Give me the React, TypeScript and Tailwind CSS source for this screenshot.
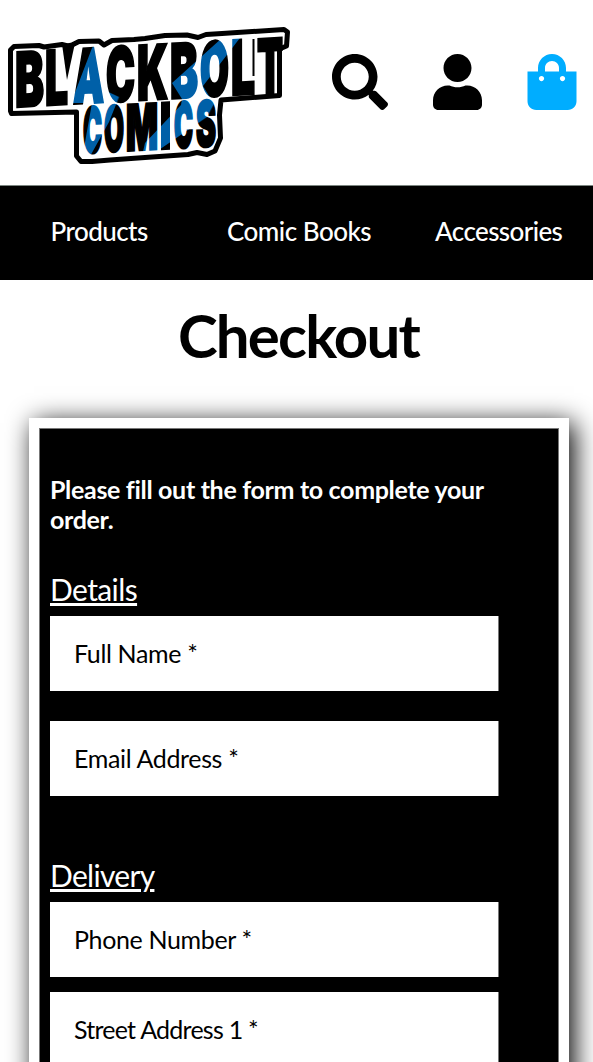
import { FaSearch, FaShoppingBag, FaUser } from 'react-icons/fa';

type Glyph = { ch: string; x: number; w: number };

const TOP_ROW: Glyph[] = [
  { ch: 'B', x: 15, w: 29 },
  { ch: 'L', x: 45, w: 23 },
  { ch: 'A', x: 73, w: 31 },
  { ch: 'C', x: 106, w: 29 },
  { ch: 'K', x: 137, w: 31 },
  { ch: 'B', x: 170, w: 28 },
  { ch: 'O', x: 200, w: 29 },
  { ch: 'L', x: 231, w: 24 },
  { ch: 'T', x: 257, w: 26 },
];

const BOTTOM_ROW: Glyph[] = [
  { ch: 'C', x: 83, w: 19 },
  { ch: 'O', x: 104, w: 20 },
  { ch: 'M', x: 126, w: 32 },
  { ch: 'I', x: 160, w: 11 },
  { ch: 'C', x: 174, w: 19 },
  { ch: 'S', x: 196, w: 20 },
];

function letters(row: Glyph[], size: number, baseline: number) {
  return row.map((g) => (
    <text
      key={g.ch + g.x}
      x={g.x}
      y={baseline}
      fontSize={size}
      textLength={g.w}
      lengthAdjust="spacingAndGlyphs"
    >
      {g.ch}
    </text>
  ));
}

function Logo() {
  return (
    <svg viewBox="8 26 283 140" className="mt-[26px] h-[140px] w-[283px] shrink-0" fontFamily="Inter, sans-serif" fontWeight={900} aria-label="Blackbolt Comics">
      <defs>
        <pattern id="bolts" patternUnits="userSpaceOnUse" x="0" y="0" width="300" height="180" patternTransform="matrix(1 0.055 0 1 0 -0.770)">
          <rect width="300" height="180" fill="#000" />
          <g fill="#0060a8">
            <path d="M97 42L92 48L71 103L92 103L84 148L88 160L109 122L119 97L102 89Z" />
            <path d="M243 34L222 38L172 83L182 99L181 105L145 143L142 156L150 156L207 117L214 104L203 86Z" />
          </g>
        </pattern>
      </defs>
      <path
        d="M10.500 50L14 46.500L39 45.500L44 47L62 44.500L68 46L72 45L79 41.500L99 41L104 45L112 40.500L134 39.500L145 38.500L165 35.500L187 35L198 37.500L206 34.500L222 33.500L284 29.500L287.500 32L286.500 46L279.500 49L279.500 95.500L221 100L219.500 115L220.500 138L215 151L207 154.500L197 152.500L188 154.500L145 157.500L110 160L92 161.500L81 161.500L76.500 156L76.500 112L11.500 113.500L10.500 111Z"
        fill="#fff"
        stroke="#000"
        strokeWidth="5"
        strokeLinejoin="round"
      />
      <path d="M62 44L75 43L67 80Z" fill="#000" />
      <path d="M253.500 39V76" stroke="#000" strokeWidth="2" />
      <g fill="url(#bolts)" stroke="url(#bolts)" strokeWidth="2.600" transform="matrix(1 -0.055 0 1 0 0.770)">
        {letters(TOP_ROW, 75, 107)}
        {letters(BOTTOM_ROW, 63, 157)}
      </g>
    </svg>
  );
}

function Field({ label, tight = false }: { label: string; tight?: boolean }) {
  return (
    <input
      aria-label={label}
      placeholder={label}
      className={`block h-[75px] w-[449px] border-r border-[#777] bg-white pb-px pl-6 text-[25px] text-black placeholder:text-black placeholder:opacity-100 ${tight ? 'tracking-[-0.750px]' : 'tracking-[-0.350px]'}`}
    />
  );
}

export default function App() {
  return (
    <div className="h-[1062px] w-full overflow-hidden bg-white font-[Lato,sans-serif] text-black">
      <header className="flex h-[185px] items-start pl-2">
        <Logo />
        <div className="mt-[54px] ml-[41px] flex">
          <FaSearch className="size-14" />
          <FaUser className="ml-[45px] h-14 w-[49px]" />
          <FaShoppingBag className="ml-[45px] h-14 w-[50px] text-[#00adff]" />
        </div>
      </header>
      <nav className="flex h-[95px] border-t border-[#7b8580] bg-black pt-[26px] text-[26px] leading-[38px] font-medium text-white">
        <a className="ml-[50.500px] w-[176.500px] tracking-[-0.550px]">Products</a>
        <a className="w-[208px] tracking-[-0.500px]">Comic Books</a>
        <a className="tracking-[-0.600px]">Accessories</a>
      </nav>
      <h1 className="mt-[15px] pl-[4px] text-center text-[60px] leading-[80px] font-bold tracking-[-1.800px]">Checkout</h1>
      <main className="mt-[43px] ml-[29px] h-[800px] w-[540px] bg-white p-[10px] shadow-[5px_5px_25px_0_#000]">
        <form className="h-full border border-[#777] bg-black pl-[10px] text-white">
          <p className="pt-[45px] text-[25px] leading-[30px] font-bold tracking-[-0.320px]">
            Please fill out the form to complete your
            <br />
            order.
          </p>
          <h2 className="mt-[35px] h-[47px] text-[30px] leading-10 tracking-[-0.600px] underline decoration-[3px] underline-offset-[2px]">Details</h2>
          <div className="flex flex-col gap-[30px]">
            <Field label="Full Name *" />
            <Field label="Email Address *" />
          </div>
          <h2 className="mt-[59px] h-[47px] text-[30px] leading-10 tracking-[-0.700px] underline decoration-[3px] underline-offset-[2px]">Delivery</h2>
          <div className="flex flex-col gap-[15px]">
            <Field label="Phone Number *" />
            <Field label="Street Address 1 *" tight />
          </div>
        </form>
      </main>
    </div>
  );
}
